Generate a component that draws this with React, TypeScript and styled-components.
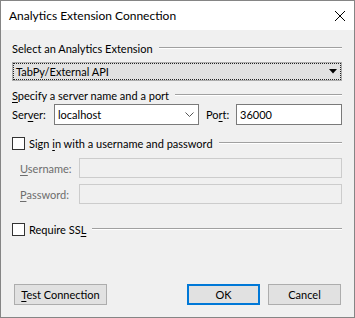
import styled, { createGlobalStyle } from "styled-components";

const Global = createGlobalStyle`
  html, body { margin: 0; padding: 0; background: #fff; }
  body {
    font-family: Lato, "Noto Sans", sans-serif;
    font-size: 11px;
    color: #000;
  }
  u { text-underline-offset: 2px; }
`;

const Window = styled.div`
  width: 355px;
  height: 318px;
  box-sizing: border-box;
  border: 1px solid #858585;
  background: #f0f0f0;
  display: flex;
  flex-direction: column;
`;

const TitleBar = styled.div`
  height: 29px;
  background: #fff;
  display: flex;
  align-items: center;
  justify-content: space-between;
  padding: 0 8px 0 8px;
`;

const Title = styled.div`
  font-size: 12px;
  color: #000;
`;

const Body = styled.div`
  flex: 1;
  display: flex;
  flex-direction: column;
  padding: 0 12px 12px 11px;
`;

const GroupHeader = styled.div<{ $top: number }>`
  display: flex;
  align-items: center;
  height: 16px;
  margin-top: ${(p) => p.$top}px;
  gap: 6px;
`;

const Rule = styled.div`
  flex: 1;
  height: 0;
  border-top: 1px solid #a0a0a0;
  border-bottom: 1px solid #fff;
`;

const SelectBox = styled.div`
  margin-top: 6px;
  height: 19px;
  box-sizing: border-box;
  border: 1px solid #adadad;
  background: #e1e1e1;
  outline: 1px dotted #222;
  outline-offset: -2px;
  display: flex;
  align-items: center;
  justify-content: space-between;
  padding: 0 4px 0 3px;
`;

const Row = styled.div<{ $top: number; $indent?: number }>`
  display: flex;
  align-items: center;
  margin-top: ${(p) => p.$top}px;
  padding-left: ${(p) => p.$indent ?? 0}px;
`;

const Label = styled.span<{ $width?: number; $gap?: number; $disabled?: boolean }>`
  width: ${(p) => (p.$width ? `${p.$width}px` : "auto")};
  margin-left: ${(p) => p.$gap ?? 0}px;
  flex: none;
  color: ${(p) => (p.$disabled ? "#6d6d6d" : "#000")};
`;

const Field = styled.div<{ $width?: number; $disabled?: boolean }>`
  height: ${(p) => (p.$disabled ? 20 : 21)}px;
  box-sizing: border-box;
  ${(p) => (p.$width ? `width: ${p.$width}px; flex: none;` : "flex: 1;")}
  border: 1px solid ${(p) => (p.$disabled ? "#cccccc" : "#7a7a7a")};
  background: ${(p) => (p.$disabled ? "#f0f0f0" : "#fff")};
  display: flex;
  align-items: center;
  justify-content: space-between;
  padding: 0 4px 0 3px;
`;

const CheckLabel = styled.span`
  display: flex;
  align-items: center;
  gap: 4px;
`;

const Check = styled.span`
  width: 13px;
  height: 13px;
  box-sizing: border-box;
  border: 1px solid #333;
  background: #fff;
  flex: none;
`;

const Footer = styled.div`
  margin-top: auto;
  display: flex;
  justify-content: space-between;
  align-items: center;
  padding: 0 1px 0 2px;
`;

const Buttons = styled.div`
  display: flex;
  gap: 8px;
`;

const Button = styled.div<{ $width: number; $default?: boolean }>`
  width: ${(p) => p.$width}px;
  height: 21px;
  box-sizing: border-box;
  border: ${(p) => (p.$default ? "2px solid #0078d7" : "1px solid #adadad")};
  background: #e1e1e1;
  display: flex;
  align-items: center;
  justify-content: center;
`;

const CloseIcon = () => (
  <svg width="12" height="12" viewBox="0 0 12 12">
    <path d="M1 1 L11 11 M11 1 L1 11" stroke="#000" strokeWidth="1" />
  </svg>
);

const DropArrow = () => (
  <svg width="8" height="5" viewBox="0 0 8 5">
    <path d="M0 0 H8 L4 4.5 Z" fill="#000" />
  </svg>
);

const Chevron = () => (
  <svg width="9" height="6" viewBox="0 0 9 6">
    <path d="M0.5 0.5 L4.5 4.5 L8.5 0.5" stroke="#555" fill="none" strokeWidth="1" />
  </svg>
);

export default function App() {
  return (
    <>
      <Global />
      <Window>
        <TitleBar>
          <Title>Analytics Extension Connection</Title>
          <CloseIcon />
        </TitleBar>
        <Body>
          <GroupHeader $top={10}>
            <span>Select an Analytics Extension</span>
            <Rule />
          </GroupHeader>
          <SelectBox>
            <span>TabPy/External API</span>
            <DropArrow />
          </SelectBox>

          <GroupHeader $top={6}>
            <span>
              <u>S</u>pecify a server name and a port
            </span>
            <Rule />
          </GroupHeader>
          <Row $top={1}>
            <Label $width={42}>
              Ser<u>v</u>er:
            </Label>
            <Field $width={145}>
              <span>localhost</span>
              <Chevron />
            </Field>
            <Label $width={30} $gap={7}>
              Po<u>r</u>t:
            </Label>
            <Field>
              <span>36000</span>
            </Field>
          </Row>

          <GroupHeader $top={10}>
            <CheckLabel>
              <Check />
              <span>
                Sign <u>i</u>n with a username and password
              </span>
            </CheckLabel>
            <Rule />
          </GroupHeader>
          <Row $top={7} $indent={8}>
            <Label $width={59} $disabled>
              <u>U</u>sername:
            </Label>
            <Field $disabled />
          </Row>
          <Row $top={6} $indent={8}>
            <Label $width={59} $disabled>
              <u>P</u>assword:
            </Label>
            <Field $disabled />
          </Row>

          <GroupHeader $top={17}>
            <CheckLabel>
              <Check />
              <span>
                Require SS<u>L</u>
              </span>
            </CheckLabel>
            <Rule />
          </GroupHeader>

          <Footer>
            <Button $width={93}>
              <span>
                <u>T</u>est Connection
              </span>
            </Button>
            <Buttons>
              <Button $width={73} $default>
                OK
              </Button>
              <Button $width={73}>Cancel</Button>
            </Buttons>
          </Footer>
        </Body>
      </Window>
    </>
  );
}
